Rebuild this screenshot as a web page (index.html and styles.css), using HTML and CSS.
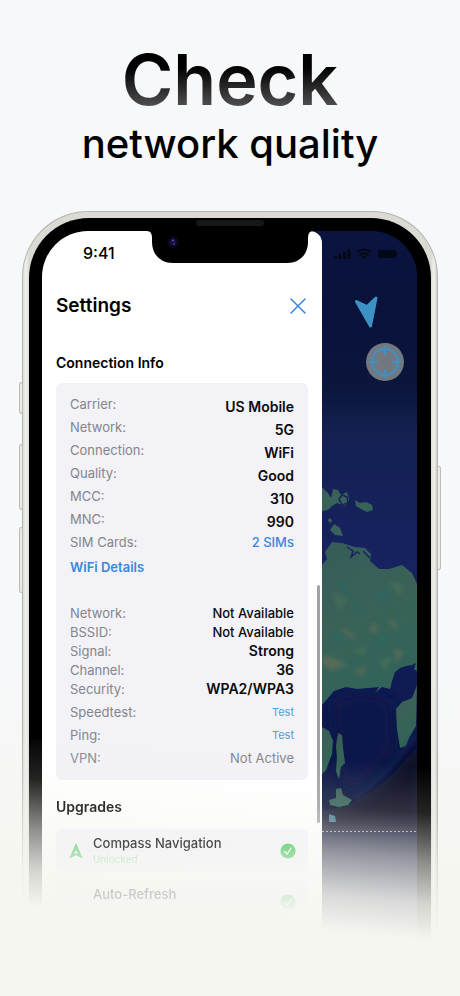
FILE: index.html
```html
<!DOCTYPE html>
<html lang="en">
<head>
<meta charset="utf-8">
<meta name="viewport" content="width=device-width, initial-scale=1">
<title>Check network quality</title>
<link rel="stylesheet" href="styles.css">
</head>
<body>
<main class="page">
  <h1 class="hero"><span class="hero-main">Check</span> <span class="hero-sub">network quality</span></h1>

  <div class="stage">
    <div class="phone">
      <span class="side-key key-mute"></span>
      <span class="side-key key-up"></span>
      <span class="side-key key-down"></span>
      <span class="side-key key-power"></span>
      <div class="bezel">
        <span class="speaker"></span>
        <div class="screen">
          <section class="drawer">
            <div class="clock">9:41</div>
            <header class="drawer-head">
              <h2 class="drawer-title">Settings</h2>
              <button class="close" type="button" aria-label="Close">
                <svg viewBox="0 0 16 16" width="16" height="16"><path d="M1 1L15 15M15 1L1 15" fill="none" stroke="#3b82dc" stroke-width="1.5" stroke-linecap="round"/></svg>
              </button>
            </header>

            <h3 class="section-title">Connection Info</h3>
            <div class="card">
              <dl class="rows rows-wide">
                <div class="row"><dt>Carrier:</dt><dd class="strong">US Mobile</dd></div>
                <div class="row"><dt>Network:</dt><dd class="strong">5G</dd></div>
                <div class="row"><dt>Connection:</dt><dd class="strong">WiFi</dd></div>
                <div class="row"><dt>Quality:</dt><dd class="strong">Good</dd></div>
                <div class="row"><dt>MCC:</dt><dd class="strong">310</dd></div>
                <div class="row"><dt>MNC:</dt><dd class="strong">990</dd></div>
                <div class="row"><dt>SIM Cards:</dt><dd><button class="link sims" type="button">2 SIMs</button></dd></div>
              </dl>
              <button class="link details" type="button">WiFi Details</button>
              <dl class="rows rows-tight">
                <div class="row"><dt>Network:</dt><dd class="medium">Not Available</dd></div>
                <div class="row"><dt>BSSID:</dt><dd class="medium">Not Available</dd></div>
                <div class="row"><dt>Signal:</dt><dd class="bold">Strong</dd></div>
                <div class="row"><dt>Channel:</dt><dd class="bold">36</dd></div>
                <div class="row"><dt>Security:</dt><dd class="bold">WPA2/WPA3</dd></div>
              </dl>
              <dl class="rows rows-wide">
                <div class="row"><dt>Speedtest:</dt><dd><button class="link test" type="button">Test</button></dd></div>
                <div class="row"><dt>Ping:</dt><dd><button class="link test" type="button">Test</button></dd></div>
                <div class="row"><dt>VPN:</dt><dd class="muted">Not Active</dd></div>
              </dl>
            </div>

            <div class="upgrades">
              <h3 class="section-title">Upgrades</h3>
              <ul class="upgrade-list">
                <li class="upgrade">
                  <svg class="upgrade-icon" viewBox="0 0 14 16" width="14" height="16"><path d="M7 1L13 15L7 11.500L1 15Z" fill="#72cf85" stroke="#72cf85" stroke-linejoin="round"/><path d="M7 7L9 11L7 10L5 11Z" fill="#f5f6f7"/></svg>
                  <div class="upgrade-text"><span class="upgrade-name">Compass Navigation</span><span class="upgrade-state">Unlocked</span></div>
                  <svg class="tick" viewBox="0 0 16 16" width="16" height="16"><circle cx="8" cy="8" r="7.600" fill="#52c765"/><path d="M4.500 8.400L7 11L11.300 5" fill="none" stroke="#fff" stroke-width="1.200" stroke-linecap="round" stroke-linejoin="round"/></svg>
                </li>
                <li class="upgrade">
                  <span class="upgrade-icon"></span>
                  <div class="upgrade-text"><span class="upgrade-name">Auto-Refresh</span></div>
                  <svg class="tick" viewBox="0 0 16 16" width="16" height="16"><circle cx="8" cy="8" r="7.600" fill="#52c765"/><path d="M4.500 8.400L7 11L11.300 5" fill="none" stroke="#fff" stroke-width="1.200" stroke-linecap="round" stroke-linejoin="round"/></svg>
                </li>
              </ul>
            </div>
            <span class="scrollbar"></span>
          </section>

          <section class="map">
            <svg class="map-art" viewBox="0 0 95 765" preserveAspectRatio="xMidYMin slice" aria-hidden="true">
              <defs>
                <linearGradient id="sea" gradientUnits="userSpaceOnUse" x1="0" y1="0" x2="0" y2="729">
                  <stop offset="0" stop-color="#0a1440"/>
                  <stop offset=".12" stop-color="#09123a"/>
                  <stop offset=".22" stop-color="#0b163d"/>
                  <stop offset=".27" stop-color="#13204f"/>
                  <stop offset=".36" stop-color="#152158"/>
                  <stop offset=".46" stop-color="#16235f"/>
                  <stop offset=".6" stop-color="#101c56"/>
                  <stop offset=".76" stop-color="#0b1742"/>
                  <stop offset=".84" stop-color="#181c38"/>
                  <stop offset="1" stop-color="#3b3e60"/>
                </linearGradient>
                <linearGradient id="land" x1="0" y1="0" x2=".3" y2="1">
                  <stop offset="0" stop-color="#365c59"/>
                  <stop offset=".5" stop-color="#3a6258"/>
                  <stop offset="1" stop-color="#326459"/>
                </linearGradient>
                <filter id="soft" x="-20%" y="-20%" width="140%" height="140%"><feGaussianBlur stdDeviation="2"/></filter>
                <filter id="deep" x="-50%" y="-50%" width="200%" height="200%"><feGaussianBlur stdDeviation="7"/></filter>
              </defs>
              <rect width="95" height="765" fill="url(#sea)"/>
              <path d="M100 505L88 523L72 542L50 560L28 573L0 580V600H100Z" fill="#080e20" filter="url(#deep)"/>
              <path d="M10 470Q40 455 70 470L72 520Q50 545 30 560L15 540Z" fill="#0a1548" filter="url(#deep)"/>
              <g fill="url(#land)">
                <path d="M0 256L6 262L9 267L11 258L16 259L19 264L25 261L27 269L23 275L15 272L10 275L6 279L0 280Z"/>
                <path d="M33 269L38 272L44 271L50 274L51 279L45 281L39 278L34 275Z"/>
                <path d="M8 299L12 293L18 297L21 305L13 304Z"/><path d="M7 287L10 289L9 292L6 290Z"/>
                <path d="M0 334L5 328L3 321L10 311L20 312L33 316L43 317L49 323L48 330L57 338L67 338L80 334L90 342L95 353V440L92 438L94 432L90 434L84 435L78 437L73 441L70 450L68 458L60 456L53 462L57 456L47 457L35 458L24 456L12 460L0 474Z"/>
                <path d="M95 454L90 467L80 471L74 478L75 498L78 517L84 515L87 507L94 495Z"/>
                <path d="M0 496L7 500L11 510L10 523L4 539L0 543Z"/>
                <path d="M16 502L20 504L21 517L23 532L19 536L17 548L14 540L15 526L14 515Z"/>
                <path d="M14 558L19 557L21 564L30 569L26 574L17 576L8 574L7 569L14 567Z"/>
                <path d="M7 583L13 585L14 591L7 591Z" fill="#42748c"/>
              </g>
              <g fill="none" stroke="#16235c" stroke-width="1.500">
                <path d="M17 268L20 264L25 266L26 272L20 274Z"/><path d="M25 316L31 320L29 326L35 321L38 323M41 320L48 327"/>
              </g>
              <g filter="url(#soft)" opacity=".55">
                <path d="M15 349l12 7l-3 9zM50 367l14-11l2 15zM8 404l15-4l-4 12zM54 404l12 2l-5 12zM12 439l10-3l-2 9zM33 371l7 6l-8 8z" fill="#286b67"/>
                <path d="M0 424l12 3l13 7l-17 5l-8-7zM18 395l9 5l9 9l-10-4zM66 386l10 7l-3 6zM73 417l9 4l-8 11zM32 440l13-5l-5 10zM52 391l5 10l-10-1z" fill="#72735a"/>
                <path d="M10 360l15 9l-8 11zM67 350l15 4l-5 12zM31 419l15-5l-5 12zM57 429l13-4l-6 16z" fill="#4c7558"/>
              </g>
              <path d="M32 567Q62 548 92 505" fill="none" stroke="#1c3568" stroke-width="5" opacity=".35" filter="url(#soft)"/>
              <path d="M0 600.500H95" stroke="#a2a4b2" stroke-width="1" stroke-dasharray="2 2"/>
            </svg>
            <div class="map-ui">
              <svg class="status" viewBox="0 0 64 12" width="64" height="12" fill="#030817"><rect x="0" y="8" width="3" height="3" rx="1"/><rect x="4.500" y="6" width="3" height="5" rx="1"/><rect x="9" y="4" width="3" height="7" rx="1"/><rect x="13.500" y="1" width="3" height="10" rx="1"/><path d="M23 4.500Q30 -1.500 37 4.500M25.500 7Q30 3.200 34.500 7" fill="none" stroke="#030817" stroke-width="1.800"/><path d="M27.500 8.800Q30 6.800 32.500 8.800L30 11.500Z"/><rect x="44" y="2" width="18" height="8" rx="2"/><rect x="62.500" y="4.500" width="1" height="3"/></svg>
              <svg class="heading" viewBox="0 0 24 32" width="24" height="32"><path d="M2.500 5.500L13 10.500L22 2L16.500 30Z" fill="#3d91c5" stroke="#3d91c5" stroke-width="3" stroke-linejoin="round"/></svg>
              <button class="locate" type="button" aria-label="Center map">
                <svg viewBox="0 0 38 38" width="38" height="38" fill="none" stroke="#468dba"><circle cx="19" cy="19" r="13" stroke-width="2.500"/><path d="M19 3V12M19 26V35M3 19H12M26 19H35" stroke-width="2.500"/></svg>
              </button>
            </div>
          </section>

          <svg class="notch" viewBox="0 0 166 33" width="166" height="33" aria-hidden="true"><path d="M0 0Q5 0 5 7V11C5 24 14 32 26 32H140C152 32 161 24 161 11V7Q161 0 166 0Z"/><circle cx="26" cy="11" r="6" fill="#080716"/><circle cx="26" cy="11" r="3.500" fill="#151044"/><circle cx="26" cy="9.500" r="1" fill="#5552b4"/><circle cx="27" cy="13" r="1" fill="#3c3590"/></svg>
        </div>
      </div>
    </div>
    <div class="fade"></div>
  </div>
</main>
</body>
</html>
```
FILE: styles.css
```css
* { box-sizing: border-box; }

body {
  margin: 0;
  font-family: Inter, "Liberation Sans", sans-serif;
  color: #000;
}

h1, h2, h3, dl, dd, ul { margin: 0; padding: 0; }

button {
  padding: 0;
  border: 0;
  background: none;
  font: inherit;
  cursor: pointer;
}

svg { display: block; }

.page {
  min-height: 100vh;
  display: flex;
  flex-direction: column;
  background: linear-gradient(#f7f8fa 0%, #f7f8fa 65%, #f6f6f1 92%);
  overflow: hidden;
}

.hero {
  display: flex;
  flex-direction: column;
  align-items: center;
  padding-top: 38px;
  height: 211px;
}

.hero-main {
  font-size: 70px;
  font-weight: 600;
  line-height: 84px;
  background: linear-gradient(#000 35%, #555 85%);
  background-clip: text;
  -webkit-background-clip: text;
  color: transparent;
}

.hero-sub {
  font-size: 40px;
  font-weight: 500;
  line-height: 44px;
}

.stage {
  position: relative;
  display: grid;
  flex: 1;
  padding: 0 22px;
}

.phone {
  position: relative;
  display: grid;
  padding: 6px 6px 0;
  border: 1px solid #b5b5b0;
  border-bottom: 0;
  border-radius: 66px 66px 0 0;
  background: linear-gradient(90deg, #dcddd8, #f2f1ed 3px, #dbdbd4 6px, #dbdbd4 calc(100% - 6px), #f2f1ed calc(100% - 3px), #cfcdca);
}

.side-key {
  position: absolute;
  width: 4px;
  border: 1px solid #bcbbb5;
  border-radius: 2px;
  background: #ecebe5;
}

.key-mute { left: -4px; top: 170px; height: 32px; }
.key-up { left: -4px; top: 232px; height: 66px; }
.key-down { left: -4px; top: 315px; height: 66px; }
.key-power { right: -4px; top: 254px; height: 104px; }

.bezel {
  position: relative;
  display: grid;
  padding: 13px 14px 0 13px;
  border-radius: 60px 60px 0 0;
  background: #000;
}

.speaker {
  position: absolute;
  top: 2px;
  left: calc(50% - 34px);
  width: 68px;
  height: 6px;
  border-radius: 3px;
  background: #171717;
}

.screen {
  position: relative;
  display: grid;
  grid-template-columns: 56fr 19fr;
  border-radius: 46px 46px 0 0;
  background: #0a1440;
  overflow: hidden;
}

.notch {
  position: absolute;
  top: 0;
  left: calc(50% - 83px);
}

.drawer {
  position: relative;
  padding: 0 14px;
  border-radius: 0 12px 0 0;
  background: #fff;
}

.clock {
  padding: 12px 0 0 27px;
  font-size: 16px;
  font-weight: 500;
  line-height: 20px;
}

.drawer-head {
  display: flex;
  align-items: center;
  justify-content: space-between;
  padding-right: 2px;
  margin-top: 31px;
  height: 24px;
}

.drawer-title { font-size: 19px; font-weight: 600; line-height: 24px; }

.section-title {
  font-size: 14px;
  font-weight: 600;
  line-height: 20px;
}

.drawer-head + .section-title { margin-top: 35px; }

.card {
  margin-top: 10px;
  padding: 12px 14px 8px;
  border-radius: 6px;
  background: #f2f2f7;
  font-size: 13px;
}

.row {
  display: flex;
  justify-content: space-between;
  align-items: flex-start;
  line-height: 18px;
  color: #85858a;
}

.rows-wide .row { height: 23px; }
.rows-tight .row { height: 19px; }

.strong { font-size: 14px; font-weight: 600; line-height: 23px; color: #0b0b0d; }
.medium { font-weight: 500; color: #0b0b0d; }
.bold { font-size: 14px; font-weight: 600; color: #0b0b0d; }
.link { display: block; line-height: 18px; color: #3b87dc; }
.sims { font-weight: 500; }
.details { margin-top: 2px; font-weight: 600; }
.test { font-size: 11px; color: #4ba3d6; }
.rows-tight { margin: 28px 0 4px; }

.scrollbar {
  position: absolute;
  top: 354px;
  right: 2px;
  width: 3px;
  height: 238px;
  border-radius: 2px;
  background: #a3a3a5;
}

.upgrades {
  position: relative;
  z-index: 2;
  margin-top: 17px;
  -webkit-mask-image: linear-gradient(rgba(0,0,0,.85) 0, rgba(0,0,0,.7) 50px, rgba(0,0,0,.2) 76px, rgba(0,0,0,.18) 100px, transparent 115px);
  mask-image: linear-gradient(rgba(0,0,0,.85) 0, rgba(0,0,0,.7) 50px, rgba(0,0,0,.2) 76px, rgba(0,0,0,.18) 100px, transparent 115px);
}

.upgrade-list {
  display: grid;
  gap: 8px;
  margin-top: 12px;
  list-style: none;
}

.upgrade {
  display: flex;
  align-items: center;
  gap: 10px;
  height: 43px;
  padding: 0 12px 0 13px;
  border-radius: 6px;
  background: rgba(236, 236, 243, .6);
}

.upgrade-icon { width: 14px; flex: none; }
.upgrade-text { display: flex; flex-direction: column; flex: 1; height: 36px; }
.upgrade-name { font-size: 13px; font-weight: 500; line-height: 20px; }
.upgrade-state { font-size: 10px; line-height: 12px; color: #a3d9ae; }

.map { position: relative; }

.map-art {
  position: absolute;
  inset: 0;
  width: 100%;
  height: 100%;
}

.map-ui {
  position: relative;
  display: flex;
  flex-direction: column;
  align-items: center;
  padding: 17px 8px 0 0;
}

.heading { margin-top: 36px; }

.locate {
  align-self: flex-end;
  margin: 15px 5px 0 0;
  border-radius: 50%;
  background: #737780;
}

.fade {
  position: absolute;
  inset: auto 0 0;
  height: 256px;
  background: linear-gradient(185deg, rgba(246,246,241,0) 30px, rgba(246,246,241,.15) 76px, rgba(246,246,241,.58) 126px, rgba(246,246,241,.86) 166px, #f6f6f1 203px);
  pointer-events: none;
}
```
